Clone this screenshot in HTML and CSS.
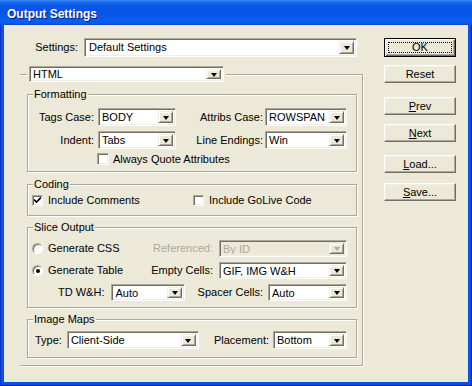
FILE: index.html
```html
<!DOCTYPE html>
<html>
<head>
<meta charset="utf-8">
<title>Output Settings</title>
<link rel="stylesheet" href="styles.css">
</head>
<body>
<div class="window">
  <div class="titlebar"><span class="title">Output Settings</span></div>
  <div class="client">
    <div class="main">
      <div class="settings-row">
        <span class="lbl settings-lbl">Settings:</span>
        <div class="combo combo-settings"><span class="val">Default Settings</span><span class="arrow"><i class="tri"></i></span></div>
      </div>

      <div class="biggroup">
        <div class="legend">
          <div class="combo combo-html"><span class="val">HTML</span><span class="arrow"><i class="tri"></i></span></div>
        </div>

        <div class="group g-format">
          <div class="gtitle">Formatting</div>
          <div class="frow frow-first">
            <span class="lbl l1">Tags Case:</span>
            <div class="combo c1"><span class="val">BODY</span><span class="arrow"><i class="tri"></i></span></div>
            <span class="lbl l2">Attribs Case:</span>
            <div class="combo c2"><span class="val">ROWSPAN</span><span class="arrow"><i class="tri"></i></span></div>
          </div>
          <div class="frow">
            <span class="lbl l1">Indent:</span>
            <div class="combo c1"><span class="val">Tabs</span><span class="arrow"><i class="tri"></i></span></div>
            <span class="lbl l2">Line Endings:</span>
            <div class="combo c2"><span class="val">Win</span><span class="arrow"><i class="tri"></i></span></div>
          </div>
          <label class="check check-quote"><span class="box"></span><span>Always Quote Attributes</span></label>
        </div>

        <div class="group g-coding">
          <div class="gtitle">Coding</div>
          <div class="crow">
            <label class="check check-comments"><span class="box checked"><svg width="7" height="7" viewBox="0 0 7 7"><path d="M0 2.5 L2.5 5 L7 0.5" fill="none" stroke="#000" stroke-width="1.6"/></svg></span><span>Include Comments</span></label>
            <label class="check"><span class="box"></span><span>Include GoLive Code</span></label>
          </div>
        </div>

        <div class="group g-slice">
          <div class="gtitle">Slice Output</div>
          <div class="srow srow-first">
            <label class="radio-item"><span class="radio"></span><span>Generate CSS</span></label>
            <span class="lbl disabled">Referenced:</span>
            <div class="combo c-wide combo-disabled"><span class="val">By ID</span><span class="arrow"><i class="tri"></i></span></div>
          </div>
          <div class="srow">
            <label class="radio-item"><span class="radio on"><i class="dot"></i></span><span>Generate Table</span></label>
            <span class="lbl">Empty Cells:</span>
            <div class="combo c-wide"><span class="val">GIF, IMG W&amp;H</span><span class="arrow"><i class="tri"></i></span></div>
          </div>
          <div class="srow">
            <span class="lbl td-lbl">TD W&amp;H:</span>
            <div class="combo c-td"><span class="val">Auto</span><span class="arrow"><i class="tri"></i></span></div>
            <span class="fill"></span>
            <span class="lbl">Spacer Cells:</span>
            <div class="combo c-spacer"><span class="val">Auto</span><span class="arrow"><i class="tri"></i></span></div>
          </div>
        </div>

        <div class="group g-maps">
          <div class="gtitle">Image Maps</div>
          <div class="mrow">
            <span class="lbl type-lbl">Type:</span>
            <div class="combo c-type"><span class="val">Client-Side</span><span class="arrow"><i class="tri"></i></span></div>
            <span class="fill"></span>
            <span class="lbl">Placement:</span>
            <div class="combo c-place"><span class="val">Bottom</span><span class="arrow"><i class="tri"></i></span></div>
          </div>
        </div>
      </div>
    </div>

    <div class="buttons">
      <button class="btn btn-default"><span class="focus">OK</span></button>
      <button class="btn b-reset">Reset</button>
      <button class="btn b-prev"><u>P</u>rev</button>
      <button class="btn b-next"><u>N</u>ext</button>
      <button class="btn b-load"><u>L</u>oad...</button>
      <button class="btn b-save"><u>S</u>ave...</button>
    </div>
  </div>
</div>
</body>
</html>
```
FILE: styles.css
```css
* { box-sizing: border-box; }
html, body { margin: 0; padding: 0; }
body {
  width: 472px;
  height: 386px;
  overflow: hidden;
  font-family: "Liberation Sans", Arial, sans-serif;
  font-size: 11px;
  color: #000;
}
.window {
  width: 472px;
  height: 386px;
  display: flex;
  flex-direction: column;
  background: #0A52E4;
  padding: 0 4px 4px;
  box-shadow: inset 1px 0 0 #0831C9, inset -1px 0 0 #0027A0, inset 0 -1px 0 #00208F;
}
.titlebar {
  height: 25px;
  margin: 0 -4px;
  display: flex;
  align-items: center;
  padding: 2px 0 0 7px;
  background: linear-gradient(180deg, #3D8CF7 0px, #1D6DF0 2px, #0A5BE8 5px, #0554E6 12px, #0A5EEE 20px, #0B5CEA 23px, #0846CF 25px);
}
.title {
  color: #fff;
  font-weight: bold;
  font-size: 12px;
  font-family: "Liberation Sans", Arial, sans-serif;
  text-shadow: 1px 1px 0 #0A1883;
}
.client {
  flex: 1;
  background: #ECE9D8;
  display: flex;
  padding: 13px 0 0 16px;
}
.main {
  width: 344px;
  display: flex;
  flex-direction: column;
}
.lbl { white-space: nowrap; line-height: 13px; }
.settings-row {
  height: 19px;
  display: flex;
  align-items: center;
  justify-content: flex-end;
  padding-right: 7px;
}
.settings-lbl { margin-right: 6px; }

/* combo box */
.combo {
  display: flex;
  align-items: stretch;
  background: #fff;
  border: 1px solid;
  border-color: #ACA899 #fff #fff #ACA899;
  box-shadow: inset 1px 1px 0 #716F64, inset -1px -1px 0 #F1EFE2;
  padding: 2px;
  height: 18px;
  flex: none;
}
.combo .val {
  flex: 1;
  padding-left: 1px;
  line-height: 12px;
  white-space: nowrap;
  overflow: hidden;
}
.combo .arrow {
  width: 15px;
  background: #ECE9D8;
  border: 1px solid;
  border-color: #F1EFE2 #716F64 #716F64 #F1EFE2;
  box-shadow: inset 1px 1px 0 #fff, inset -1px -1px 0 #ACA899;
  display: flex;
  align-items: center;
  justify-content: center;
}
.tri {
  display: block;
  width: 0;
  height: 0;
  border-left: 3.5px solid transparent;
  border-right: 3.5px solid transparent;
  border-top: 4px solid #000;
  margin-top: 1px;
}
.combo-settings { width: 273px; height: 19px; }
.combo-settings .val { line-height: 13px; padding-left: 2px; }
.combo-html { width: 195px; height: 16px; }
.combo-html .val { line-height: 10px; }
.combo-disabled { background: #ECE9D8; }
.combo-disabled .val { color: #ACA899; }
.combo-disabled .tri { border-top-color: #ACA899; }

/* big group */
.biggroup {
  margin-top: 17px;
  width: 343px;
  border-top: 1px solid #ACA899;
  border-right: 1px solid #ACA899;
  border-bottom: 1px solid #ACA899;
  box-shadow: inset 0 1px 0 #fff, 1px 0 0 #fff, 0 1px 0 #fff;
  padding: 0 5px 7px 7px;
}
.legend {
  margin: -9px 0 0 0;
  padding: 0 2px;
  background: #ECE9D8;
  width: fit-content;
}

/* group boxes */
.group {
  width: 330px;
  border: 1px solid #ACA899;
  box-shadow: inset 1px 1px 0 #fff, 1px 1px 0 #fff;
  padding: 0 9px 0 4px;
}
.gtitle {
  margin: -7px 0 0 1px;
  padding: 0 1px;
  width: fit-content;
  height: 13px;
  line-height: 13px;
  background: #ECE9D8;
}
.g-format { margin-top: 12px; height: 78px; }
.g-coding { margin-top: 12px; height: 32px; }
.g-slice { margin-top: 11px; height: 81px; }
.g-maps { margin-top: 11px; height: 39px; }

.frow { display: flex; align-items: center; height: 18px; margin-top: 5px; }
.frow-first { margin-top: 7px; }
.frow .l1 { width: 62px; text-align: right; }
.frow .c1 { width: 78px; margin-left: 4px; }
.frow .l2 { width: 87px; text-align: right; }
.frow .c2 { width: 82px; margin-left: 2px; }

.check {
  display: flex;
  align-items: center;
  line-height: 13px;
  white-space: nowrap;
}
.box {
  width: 12px;
  height: 12px;
  background: #fff;
  border: 1px solid;
  border-color: #ACA899 #fff #fff #ACA899;
  box-shadow: inset 1px 1px 0 #716F64, inset -1px -1px 0 #F1EFE2;
  margin-right: 4px;
  display: flex;
  align-items: center;
  justify-content: center;
  flex: none;
}
.check-quote { margin: 3px 0 0 65px; height: 14px; }
.check-quote .box { width: 12px; height: 12px; }

.crow { display: flex; align-items: center; height: 13px; margin-top: 3px; }
.crow .box { width: 11px; height: 11px; margin-right: 5px; }
.check-comments { width: 161px; }

.srow { display: flex; align-items: center; height: 17px; margin-top: 5px; }
.srow-first { margin-top: 6px; }
.radio-item { flex: 1; display: flex; align-items: center; white-space: nowrap; line-height: 13px; }
.radio {
  width: 11px;
  height: 11px;
  border-radius: 50%;
  background: #fff;
  border: 1px solid;
  border-color: #ACA899 #fff #fff #ACA899;
  box-shadow: inset 1px 1px 0 #716F64;
  margin-right: 5px;
  display: flex;
  align-items: center;
  justify-content: center;
}
.radio .dot { width: 4px; height: 4px; border-radius: 50%; background: #000; display: block; }
.disabled { color: #ACA899; }
.c-wide { width: 128px; height: 17px; margin-left: 6px; }
.td-lbl { margin-left: 26px; }
.c-td { width: 74px; height: 17px; margin-left: 7px; }
.fill { flex: 1; }
.c-spacer { width: 79px; height: 17px; margin-left: 5px; }

.mrow { display: flex; align-items: center; height: 18px; margin-top: 5px; }
.type-lbl { margin-left: 3px; }
.c-type { width: 132px; margin-left: 5px; }
.c-place { width: 74px; margin-left: 4px; }

/* buttons */
.buttons {
  margin-left: 20px;
  width: 72px;
  display: flex;
  flex-direction: column;
}
.btn {
  width: 72px;
  height: 18px;
  padding: 0;
  font-family: "Liberation Sans", Arial, sans-serif;
  font-size: 11px;
  color: #000;
  background: #ECE9D8;
  border: 1px solid;
  border-color: #fff #716F64 #716F64 #fff;
  box-shadow: inset -1px -1px 0 #ACA899, inset 1px 1px 0 #F1EFE2;
  line-height: 14px;
  display: flex;
  align-items: center;
  justify-content: center;
}
.btn u { text-decoration: underline; text-underline-offset: 1px; }
.btn-default {
  height: 19px;
  border: 1px solid #000;
  box-shadow: inset 1px 1px 0 #fff, inset -1px -1px 0 #716F64, inset -2px -2px 0 #ACA899;
  padding: 3px;
}
.focus {
  flex: 1;
  align-self: stretch;
  border: 1px dotted #000;
  display: flex;
  align-items: center;
  justify-content: center;
  line-height: 11px;
}
.b-reset { margin-top: 8px; }
.b-prev { margin-top: 14px; }
.b-next { margin-top: 9px; }
.b-load { margin-top: 13px; }
.b-save { margin-top: 10px; }
```
